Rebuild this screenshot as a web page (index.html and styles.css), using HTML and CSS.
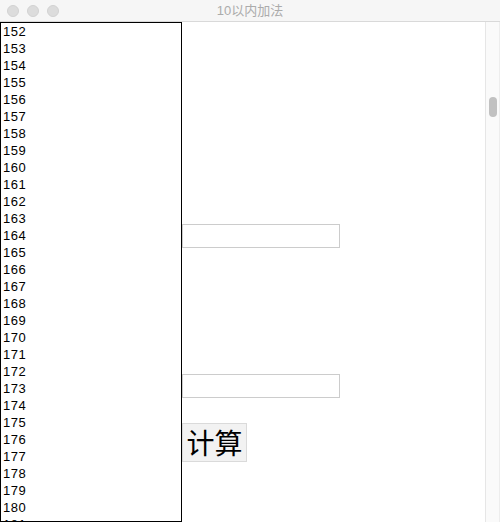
FILE: index.html
```html
<!DOCTYPE html>
<html lang="zh">
<head>
<meta charset="utf-8">
<title>10以内加法</title>
<link rel="stylesheet" href="styles.css">
</head>
<body>
<div class="window">
  <div class="titlebar">
    <div class="lights">
      <span class="light"></span>
      <span class="light"></span>
      <span class="light"></span>
    </div>
    <div class="title">10以内加法</div>
    <div class="spacer"></div>
  </div>
  <div class="content">
    <div class="page">
      <div class="list">
        <div class="row">152</div>
        <div class="row">153</div>
        <div class="row">154</div>
        <div class="row">155</div>
        <div class="row">156</div>
        <div class="row">157</div>
        <div class="row">158</div>
        <div class="row">159</div>
        <div class="row">160</div>
        <div class="row">161</div>
        <div class="row">162</div>
        <div class="row">163</div>
        <div class="row">164</div>
        <div class="row">165</div>
        <div class="row">166</div>
        <div class="row">167</div>
        <div class="row">168</div>
        <div class="row">169</div>
        <div class="row">170</div>
        <div class="row">171</div>
        <div class="row">172</div>
        <div class="row">173</div>
        <div class="row">174</div>
        <div class="row">175</div>
        <div class="row">176</div>
        <div class="row">177</div>
        <div class="row">178</div>
        <div class="row">179</div>
        <div class="row">180</div>
        <div class="row">181</div>
      </div>
      <div class="form">
        <input class="field" type="text">
        <input class="field second" type="text">
        <button class="calc" type="button">计算</button>
      </div>
    </div>
    <div class="scrollbar">
      <div class="thumb"></div>
    </div>
  </div>
</div>
</body>
</html>
```
FILE: styles.css
```css
* { box-sizing: border-box; }
html, body {
  margin: 0;
  padding: 0;
  background: #ffffff;
}
body {
  font-family: "Liberation Sans", "Noto Sans CJK SC", sans-serif;
}
.window {
  width: 500px;
  height: 522px;
  display: flex;
  flex-direction: column;
  overflow: hidden;
}
.titlebar {
  height: 22px;
  flex: none;
  background: #f6f6f6;
  border-bottom: 1px solid #d9d9d9;
  display: grid;
  grid-template-columns: 1fr auto 1fr;
  align-items: center;
}
.lights {
  display: flex;
  gap: 8px;
  padding-left: 7px;
}
.light {
  width: 12px;
  height: 12px;
  border-radius: 50%;
  background: #dcdcdc;
  border: 1px solid #d2d2d2;
}
.title {
  font-size: 13px;
  color: #ababab;
  font-family: "Liberation Sans", "Noto Sans CJK SC", sans-serif;
  line-height: 20px;
}
.content {
  flex: 1;
  display: flex;
  min-height: 0;
}
.page {
  flex: 1;
  display: flex;
  align-items: flex-start;
}
.list {
  width: 182px;
  height: 500px;
  flex: none;
  border: 1px solid #000000;
  overflow: hidden;
  padding-left: 2px;
  font-size: 13px;
  line-height: 17px;
  letter-spacing: 0.5px;
  color: #000000;
}
.form {
  display: flex;
  flex-direction: column;
  align-items: flex-start;
  padding-top: 202px;
}
.field {
  width: 158px;
  height: 24px;
  margin: 0;
  border: 1px solid #cccccc;
  background: #ffffff;
  padding: 0 4px;
  font-size: 13px;
}
.second {
  margin-top: 126px;
}
.calc {
  margin-top: 25px;
  height: 39px;
  width: 65px;
  padding: 0;
  border: 1px solid #dadada;
  background: #f2f2f2;
  font-family: "Noto Sans CJK SC", sans-serif;
  font-size: 28px;
  line-height: 37px;
  color: #000000;
}
.scrollbar {
  width: 15px;
  flex: none;
  background: #fafafa;
  border-left: 1px solid #e6e6e6;
  border-right: 1px solid #ededed;
  padding-top: 75px;
  padding-left: 3px;
}
.thumb {
  width: 8px;
  height: 20px;
  border-radius: 4px;
  background: #c1c1c1;
}
```
